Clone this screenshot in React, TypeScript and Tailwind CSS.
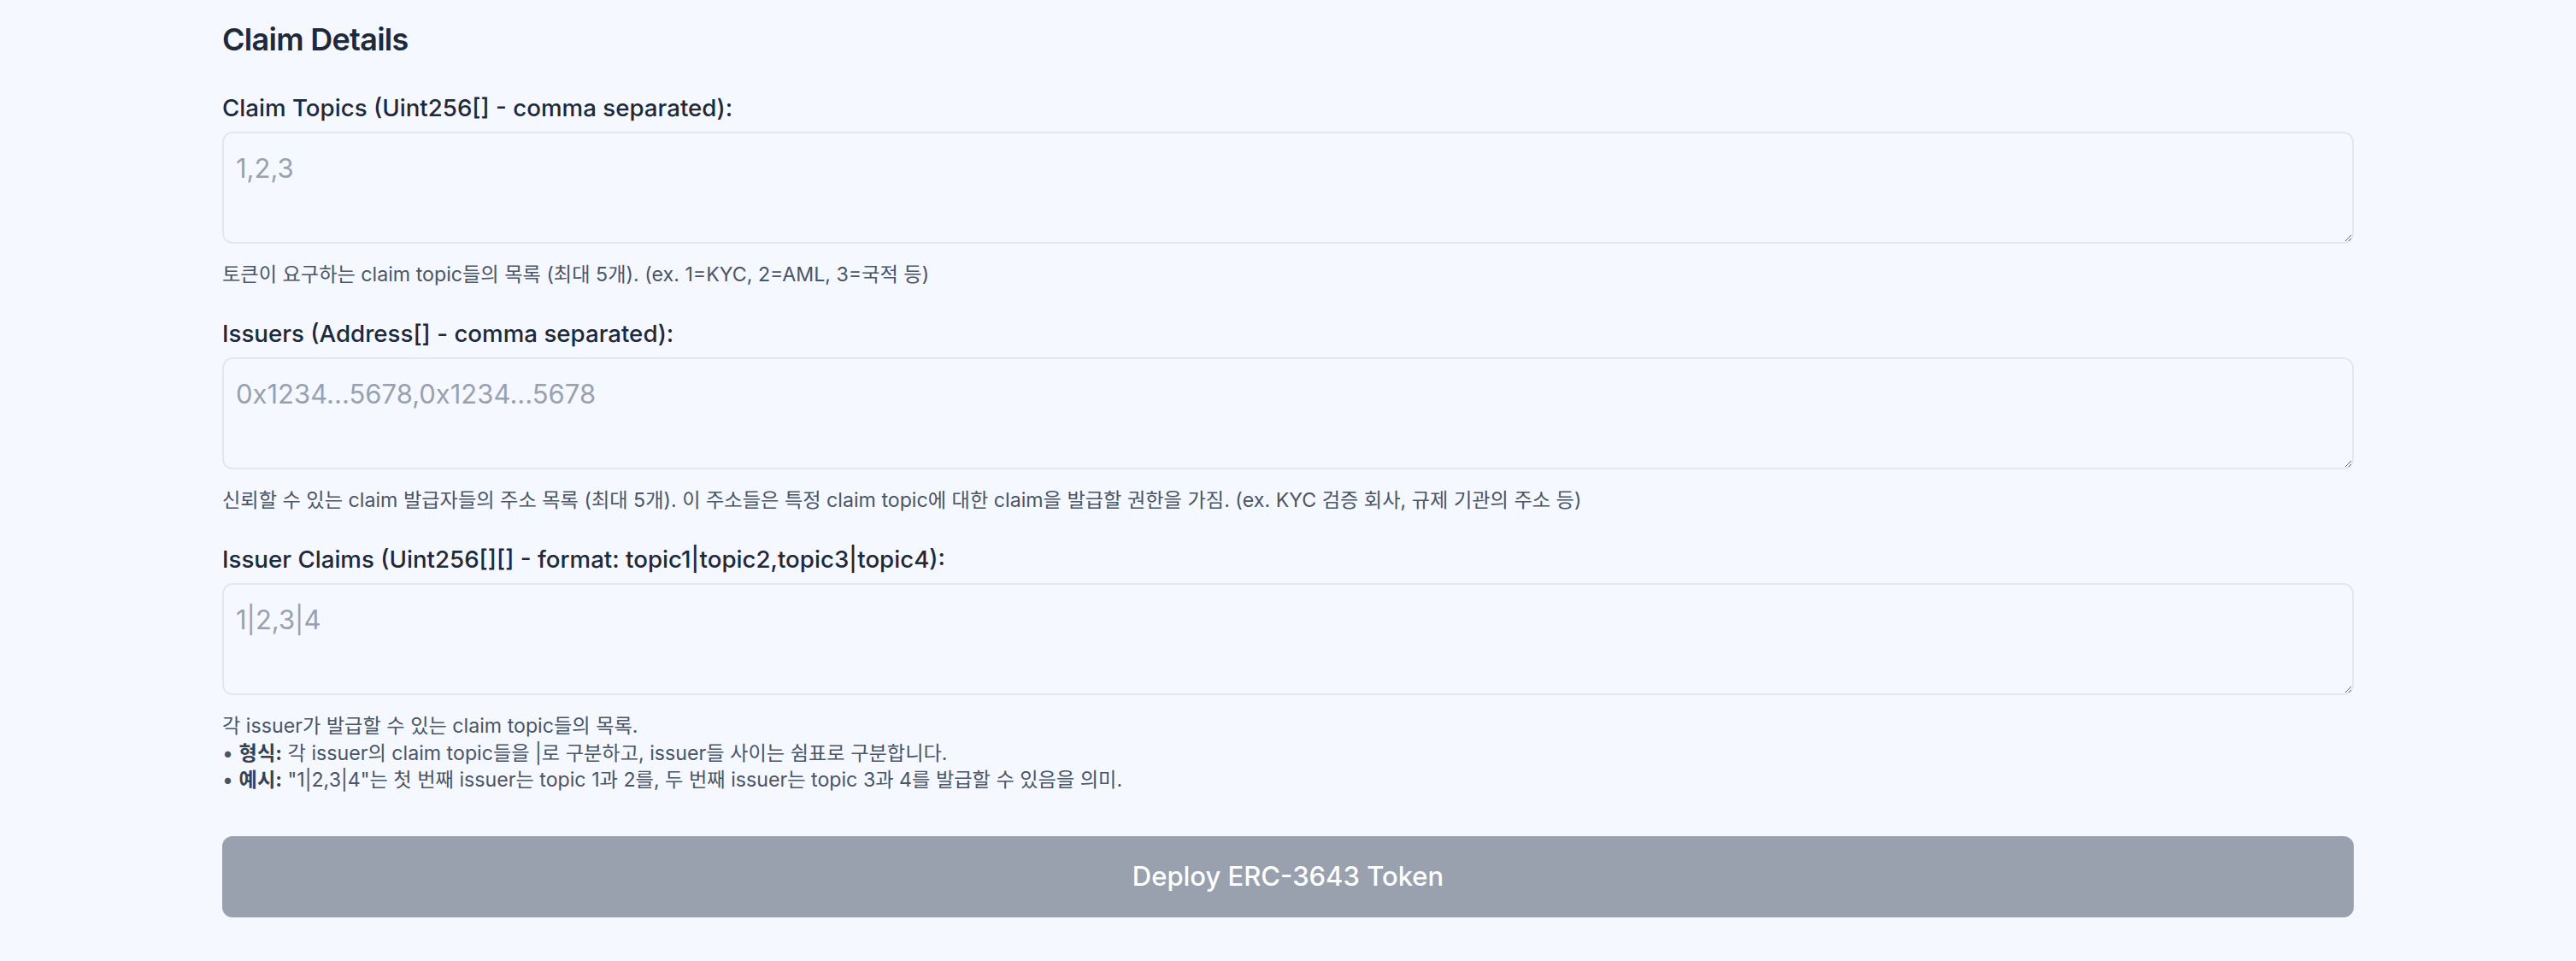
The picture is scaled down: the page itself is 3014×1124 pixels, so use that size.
const fontStack = "font-['Inter','Noto_Sans_CJK_KR',sans-serif]";

type FieldProps = {
  label: string;
  placeholder: string;
  children: React.ReactNode;
};

const Field = ({ label, placeholder, children }: FieldProps) => (
  <div className="flex flex-col">
    <label className="text-[27.7px] leading-[40px] font-medium text-gray-800">
      {label}
    </label>
    <textarea
      placeholder={placeholder}
      className={`${fontStack} mt-2 h-[131px] w-full rounded-xl border-2 border-gray-200 bg-transparent pt-[18px] pl-[14px] text-[31px] leading-[46px] text-gray-800 placeholder:text-gray-400 focus:outline-none`}
    />
    <div className="mt-[21px] text-[23.2px] leading-[31.5px] text-gray-600">
      {children}
    </div>
  </div>
);

export default function App() {
  return (
    <div className={`${fontStack} min-h-screen w-full bg-[#f5f8ff]`}>
      <div className="mx-auto w-[2494px] pt-[22px] pb-[50px]">
        <h2 className="text-[36px] leading-[48px] font-semibold tracking-[-0.02em] text-gray-800">
          Claim Details
        </h2>

        <div className="mt-[36px] flex flex-col gap-[32.5px]">
          <Field
            label="Claim Topics (Uint256[] - comma separated):"
            placeholder="1,2,3"
          >
            토큰이 요구하는 claim topic들의 목록 (최대 5개). (ex. 1=KYC, 2=AML,
            3=국적 등)
          </Field>

          <Field
            label="Issuers (Address[] - comma separated):"
            placeholder="0x1234...5678,0x1234...5678"
          >
            신뢰할 수 있는 claim 발급자들의 주소 목록 (최대 5개). 이 주소들은
            특정 claim topic에 대한 claim을 발급할 권한을 가짐. (ex. KYC 검증
            회사, 규제 기관의 주소 등)
          </Field>

          <Field
            label="Issuer Claims (Uint256[][] - format: topic1|topic2,topic3|topic4):"
            placeholder="1|2,3|4"
          >
            <p>각 issuer가 발급할 수 있는 claim topic들의 목록.</p>
            <p>
              • <span className="font-bold text-gray-700">형식:</span> 각
              issuer의 claim topic들을 |로 구분하고, issuer들 사이는 쉼표로
              구분합니다.
            </p>
            <p>
              • <span className="font-bold text-gray-700">예시:</span>{" "}
              "1|2,3|4"는 첫 번째 issuer는 topic 1과 2를, 두 번째 issuer는 topic
              3과 4를 발급할 수 있음을 의미.
            </p>
          </Field>
        </div>

        <button
          type="button"
          className="mt-[49px] h-[95px] w-full rounded-xl bg-gray-400 text-[31px] font-medium text-white"
        >
          Deploy ERC-3643 Token
        </button>
      </div>
    </div>
  );
}
